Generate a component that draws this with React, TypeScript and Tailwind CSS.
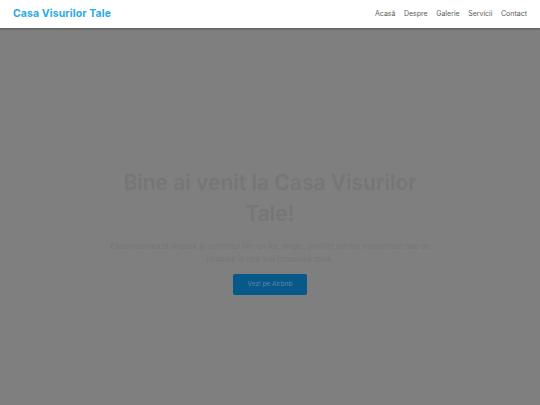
export default function App() {
  const links = ["Acasă", "Despre", "Galerie", "Servicii", "Contact"]

  return (
    <div className="min-h-screen flex flex-col bg-[#7f7f7f]" style={{ fontFamily: "Inter, 'DejaVu Sans', sans-serif" }}>
      <header className="h-[28px] bg-white shadow-[0_1px_2px_rgba(0,0,0,0.35)] flex items-center justify-between px-[13px] relative z-10">
        <div className="text-[10.5px] font-bold text-[#29abe2] tracking-[0.1px]">Casa Visurilor Tale</div>
        <nav className="flex items-center gap-[8.5px] text-[7px] text-[#5a5a5a]">
          {links.map((l) => (
            <a key={l} href="#">
              {l}
            </a>
          ))}
        </nav>
      </header>

      <main className="flex-1 flex flex-col items-center pt-[139px]">
        <div className="w-[326px] text-center flex flex-col items-center">
          <h1 className="text-[21px] leading-[31px] font-semibold text-[#767676]">
            Bine ai venit la Casa Visurilor Tale!
          </h1>
          <p className="mt-[11px] text-[7.5px] leading-[13px] tracking-[0.1px] text-[#767676]">
            Experimentează liniștea și confortul într-un loc magic, perfect pentru momentele tale de relaxare în cea mai frumoasă zonă.
          </p>
          <button className="mt-[8px] w-[74px] h-[21px] rounded-[2px] bg-[#07598a] text-[6.5px] text-[#5f88a8]">
            Vezi pe Airbnb
          </button>
        </div>
      </main>
    </div>
  )
}
